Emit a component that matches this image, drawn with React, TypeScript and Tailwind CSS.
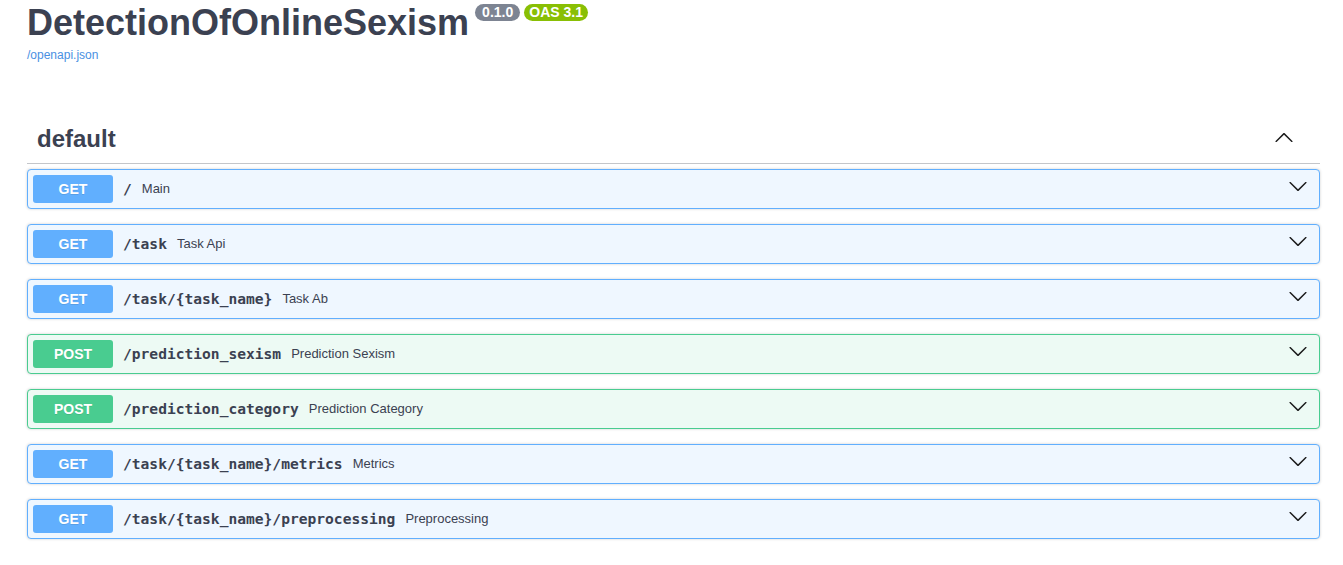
import React from 'react';

interface Operation {
  method: 'GET' | 'POST';
  path: string;
  summary: string;
}

const operations: Operation[] = [
  { method: 'GET', path: '/', summary: 'Main' },
  { method: 'GET', path: '/task', summary: 'Task Api' },
  { method: 'GET', path: '/task/{task_name}', summary: 'Task Ab' },
  { method: 'POST', path: '/prediction_sexism', summary: 'Prediction Sexism' },
  { method: 'POST', path: '/prediction_category', summary: 'Prediction Category' },
  { method: 'GET', path: '/task/{task_name}/metrics', summary: 'Metrics' },
  { method: 'GET', path: '/task/{task_name}/preprocessing', summary: 'Preprocessing' },
];

const ArrowUp = ({ className }: { className?: string }) => (
  <svg className={className} width="20" height="20" viewBox="0 0 20 20" fill="currentColor" aria-hidden="true">
    <path d="M 17.418 14.908 C 17.69 15.176 18.127 15.176 18.397 14.908 C 18.667 14.64 18.668 14.207 18.397 13.939 L 10.489 6.109 C 10.219 5.841 9.782 5.841 9.51 6.109 L 1.602 13.939 C 1.332 14.207 1.332 14.64 1.602 14.908 C 1.873 15.176 2.311 15.176 2.581 14.908 L 10 7.767 L 17.418 14.908 Z" />
  </svg>
);

const ArrowDown = ({ className }: { className?: string }) => (
  <svg className={className} width="20" height="20" viewBox="0 0 20 20" fill="currentColor" aria-hidden="true">
    <path d="M 17.418 6.109 C 17.69 5.841 18.127 5.841 18.397 6.109 C 18.667 6.377 18.668 6.81 18.397 7.078 L 10.489 14.908 C 10.219 15.176 9.782 15.176 9.51 14.908 L 1.602 7.078 C 1.332 6.81 1.332 6.377 1.602 6.109 C 1.873 5.841 2.311 5.841 2.581 6.109 L 10 13.25 L 17.418 6.109 Z" />
  </svg>
);

const OpBlock = ({ op }: { op: Operation }) => {
  const isGet = op.method === 'GET';

  return (
    <div
      className={`mb-[15px] rounded-[4px] border shadow-[0_0_3px_rgba(0,0,0,0.19)] ${
        isGet ? 'border-[#61affe] bg-[#eff7ff]' : 'border-[#49cc90] bg-[#edfaf4]'
      }`}
    >
      <div className="flex items-center p-[5px]">
        {/* Method */}
        <span
          className={`flex h-[28px] w-[80px] shrink-0 items-center justify-center rounded-[3px] text-[14px] font-bold text-white [text-shadow:0_1px_0_rgba(0,0,0,0.1)] ${
            isGet ? 'bg-[#61affe]' : 'bg-[#49cc90]'
          }`}
        >
          {op.method}
        </span>

        {/* Path, Summary */}
        <span className="px-[10px] font-['DejaVu_Sans_Mono',monospace] text-[14.6px] font-bold text-[#3b4151]">
          {op.path}
        </span>
        <span className="flex-1 text-[13px] text-[#3b4151]">{op.summary}</span>

        <ArrowDown className="mr-[6px] mb-[6px] text-[#1b1b1b]" />
      </div>
    </div>
  );
};

export default function App() {
  return (
    <div className="min-h-[565px] bg-white pl-[27px] pr-[23px] font-['Liberation_Sans',Arial,sans-serif] text-[#3b4151]">
      {/* Info */}
      <div className="pt-[5px]">
        <div className="flex items-start">
          <h2 className="text-[36px] leading-[36px] font-bold text-[#3b4151]">DetectionOfOnlineSexism</h2>
          <span className="mt-[-1px] ml-[6px] rounded-full bg-[#7d8492] px-[7px] text-[14px] leading-[17px] font-bold text-white">
            0.1.0
          </span>
          <span className="mt-[-1px] ml-[4px] rounded-full bg-[#89bf04] px-[5px] text-[14px] leading-[17px] font-bold text-white">
            OAS 3.1
          </span>
        </div>
        <a className="mt-[7px] block text-[12px] leading-[14px] text-[#4990e2]" href="#">
          /openapi.json
        </a>
      </div>

      {/* Tag section */}
      <div className="mt-[53px]">
        <div className="mb-[5px] flex items-center border-b border-[rgba(59,65,81,0.3)] py-[10px] pr-[20px] pl-[10px]">
          <h3 className="flex-1 text-[24px] leading-[28px] font-bold text-[#3b4151]">default</h3>
          <ArrowUp className="mr-[6px] mb-[4px] text-[#1b1b1b]" />
        </div>
        {operations.map((op, i) => (
          <OpBlock key={i} op={op} />
        ))}
      </div>
    </div>
  );
}
